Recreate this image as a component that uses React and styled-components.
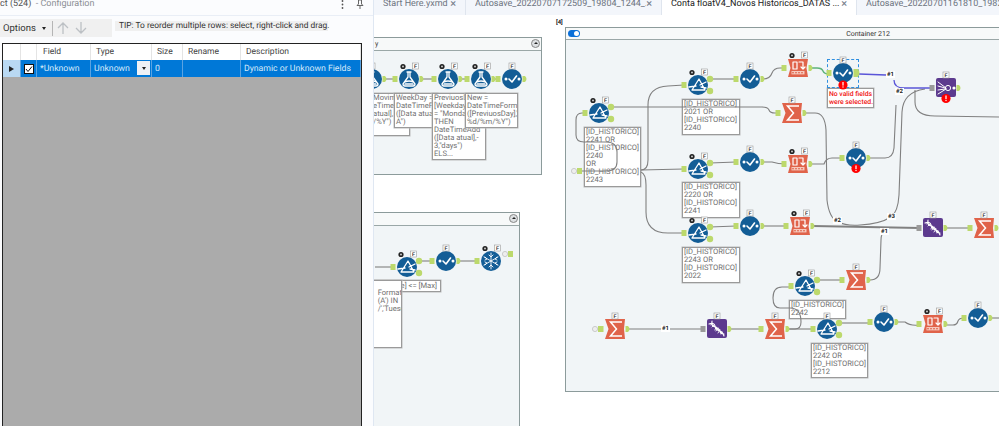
import React from "react";
import styled, { createGlobalStyle } from "styled-components";

const OX = 374;
const OY = 15;
const BLUE = "#135d96";
const ORANGE = "#e0634a";
const PURPLE = "#5c3a8e";
const GREEN = "#bcd96c";

const Global = createGlobalStyle`
  html, body { margin: 0; padding: 0; background: #fff; overflow: hidden; }
  * { box-sizing: border-box; }
`;

const Page = styled.div`
  display: flex;
  width: 999px;
  height: 426px;
  overflow: hidden;
  font-family: Roboto, "Open Sans", sans-serif;
  text-rendering: geometricPrecision;
`;

/* ---------- configuration panel ---------- */
const Panel = styled.aside`
  display: flex;
  flex-direction: column;
  flex: 0 0 374px;
  height: 426px;
  background: #fbfcfe;
  border-right: 1px solid #dfe7f2;
  overflow: hidden;
`;
const PanelHead = styled.header`
  display: flex;
  align-items: center;
  height: 16px;
  padding: 0 9px 7px 0;
  font-size: 9px;
  color: #555;
  border-bottom: 1px solid #e9eef6;
`;
const PanelTitle = styled.span`
  flex: 1;
  white-space: pre;
  line-height: 9px;
`;
const Muted = styled.span`
  color: #8b8f95;
`;
const HeadIcons = styled.div`
  display: flex;
  align-items: center;
  gap: 12px;
  color: #666;
`;
const Tools = styled.div`
  display: flex;
  align-items: flex-start;
  gap: 3px;
  height: 27px;
  padding-top: 3px;
`;
const OptionsBar = styled.div`
  display: flex;
  align-items: center;
  width: 112px;
  height: 18px;
  padding-left: 3px;
  background: #f0f0f0;
  font-size: 9.5px;
  color: #333;
`;
const Caret = styled.span`
  width: 0;
  height: 0;
  margin: 0 ${(p) => p.$m ?? 6}px;
  border: 2.5px solid transparent;
  border-top: 3px solid #222;
  border-bottom: 0;
`;
const Divider = styled.span`
  width: 1px;
  height: 15px;
  background: #b5b5b5;
  margin-right: 3px;
`;
const Tip = styled.div`
  width: 213px;
  height: 10px;
  margin-top: 2px;
  padding-left: 4px;
  background: #f0f0f0;
  font-size: 8.4px;
  line-height: 10px;
  color: #333;
  white-space: nowrap;
`;
const GridFrame = styled.div`
  display: flex;
  flex-direction: column;
  flex: 1;
  width: 360px;
  margin-left: 2px;
  border: 1px solid #222;
  border-bottom: 0;
  background: #ababab;
`;
const GridRow = styled.div`
  display: grid;
  grid-template-columns: 18px 16px 54px 61px 31px 58px 1fr;
  height: ${(p) => p.$h}px;
  background: ${(p) => p.$bg};
`;
const HeadCell = styled.div`
  padding-left: ${(p) => p.$pad || 6}px;
  border-right: 1px solid #e4e4e4;
  font-size: 8.5px;
  line-height: 16px;
  color: #444;
`;
const Cell = styled.div`
  position: relative;
  display: flex;
  align-items: center;
  padding-left: 3px;
  border-right: 1px solid #5aa3e2;
  font-size: 8.7px;
  color: #d5e8f9;
  white-space: nowrap;
`;
const RowHeader = styled(Cell)`
  justify-content: center;
  padding: 0;
  background: #b9d9f3;
`;
const Arrow = styled.span`
  width: 0;
  height: 0;
  border: 3px solid transparent;
  border-left: 5px solid #222;
  border-right: 0;
`;
const Check = styled.span`
  display: flex;
  align-items: center;
  justify-content: center;
  width: 10px;
  height: 10px;
  background: #fff;
  border: 1px solid #111;
`;
const Drop = styled.span`
  position: absolute;
  right: 1px;
  top: 1px;
  display: flex;
  align-items: center;
  justify-content: center;
  width: 13px;
  height: 14px;
  background: #eef1f5;
`;

/* ---------- main area ---------- */
const Main = styled.main`
  display: flex;
  flex-direction: column;
  flex: 1;
  min-width: 0;
`;
const TabBar = styled.nav`
  display: flex;
  flex: 0 0 15px;
  background: #f3f6fb;
  overflow: hidden;
`;
const Tab = styled.div`
  display: flex;
  flex: 0 0 ${(p) => p.$w}px;
  min-width: 0;
  align-items: flex-start;
  height: 15px;
  padding: 0 9px 0 9px;
  background: ${(p) => (p.$active ? "#fff" : "transparent")};
  border-right: 1px solid #dfe5ee;
  font-size: 9px;
  line-height: 9px;
  color: ${(p) => (p.$active ? "#222" : "#6d7480")};
  white-space: nowrap;
`;
const TabLabel = styled.span`
  flex: 1;
  min-width: 0;
  height: 11px;
  overflow: hidden;
`;
const TabClose = styled.span`
  font-size: 11px;
  line-height: 8px;
  color: #77808c;
`;
const Canvas = styled.section`
  position: relative;
  flex: 1;
  overflow: hidden;
  background: #fff;
`;
const place = (p) => ({
  style: {
    left: p.$x - OX,
    top: p.$y - OY,
    width: p.$w,
    height: p.$h,
  },
});
const Container = styled.div.attrs(place)`
  position: absolute;
  background: #f1f5f7;
  border: 1.5px solid #8c9b9b;
`;
const ContainerHead = styled.div`
  display: flex;
  align-items: center;
  justify-content: center;
  position: relative;
  height: ${(p) => p.$h}px;
  background: #f7f9f9;
  border-bottom: 1.5px solid #9aa7a7;
  font-size: 7px;
  color: #333;
`;
const Collapse = styled.span`
  position: absolute;
  top: 1px;
  right: 1px;
  width: 9px;
  height: 9px;
  border: 1px solid #888;
  border-radius: 50%;
  background: #dde0e2;
  &::after {
    content: "";
    position: absolute;
    left: 1.5px;
    top: 1.5px;
    border: 2px solid transparent;
    border-bottom: 2.5px solid #222;
    border-top: 0;
  }
`;
const Toggle = styled.span`
  position: absolute;
  left: 2px;
  top: 2px;
  width: 12px;
  height: 7px;
  border-radius: 4px;
  background: #0a6fd8;
  &::after {
    content: "";
    position: absolute;
    right: 1px;
    top: 1px;
    width: 5px;
    height: 5px;
    border-radius: 50%;
    background: #fff;
  }
`;
const HeadText = styled.span`
  position: absolute;
  left: 44px;
  top: 2px;
  line-height: 8px;
`;
const TinyLabel = styled.span.attrs(place)`
  position: absolute;
  font-size: 6px;
  line-height: 7px;
  font-weight: 700;
  color: #222;
  background: ${(p) => p.$bg || "transparent"};
  padding: 0 1px;
  white-space: nowrap;
`;
const Note = styled.div.attrs(place)`
  position: absolute;
  padding: ${(p) => (p.$alert ? "1px 0 0 1px" : "0 0 0 1px")};
  background: #fff;
  border: 1px solid #9a9a9a;
  box-shadow: 0 0 0 0.5px #bbb;
  font-size: ${(p) => (p.$alert ? 6.8 : 7.6)}px;
  line-height: 8px;
  font-weight: ${(p) => (p.$alert ? 500 : 400)};
  color: ${(p) => (p.$alert ? "#f01010" : "#707070")};
  overflow: hidden;
  white-space: nowrap;
`;
const NoteLine = styled.div`
  height: 8px;
  white-space: pre;
  text-align: ${(p) => (p.$right ? "right" : "left")};
  padding: ${(p) => (p.$right ? "1px 3px 0 0" : "0")};
`;
const Wires = styled.svg`
  position: absolute;
  left: 0;
  top: 0;
  width: 625px;
  height: 411px;
  fill: none;
`;
const ToolBox = styled.svg.attrs((p) => ({
  style: { left: p.$x - OX - 24, top: p.$y - OY - 24 },
}))`
  position: absolute;
  width: 48px;
  height: 48px;
  overflow: visible;
`;
const Selection = styled.div.attrs(place)`
  position: absolute;
  border: 1px dashed #2f8fe0;
`;

/* ---------- tool icons ---------- */
const W = { stroke: "#fff", fill: "none", strokeWidth: 1.3, strokeLinecap: "round", strokeLinejoin: "round" };

const Filter = () => (
  <>
    <circle r="10" fill={BLUE} />
    <path d="M1 -6 L7 5 L-6 5 Z M-9 2 L-2 1 M2 0 L8 -3 M3 2 L8 3" {...W} />
  </>
);
const Select = () => (
  <>
    <circle r="10" fill={BLUE} />
    <circle cx="-6" cy="0" r="1.5" fill="#fff" />
    <circle cx="7" cy="0" r="1.5" fill="#fff" />
    <path d="M-3 0 L0 3 L4.5 -3" {...W} strokeWidth="1.6" />
  </>
);
const Flask = () => (
  <>
    <circle r="10" fill={BLUE} />
    <path d="M-2 -7 L2 -7 M-1 -7 L-1 -2 L-6 5 Q-6 7 -4 7 L4 7 Q6 7 6 5 L1 -2 L1 -7 M-4 3 Q0 1 4 3" {...W} />
    <path d="M-4 4 L4 4 L5 6 L-5 6 Z" fill="#fff" opacity="0.75" />
  </>
);
const Snow = () => (
  <>
    <circle r="10" fill={BLUE} />
    <path d="M0 -8 L0 8 M-7 -4 L7 4 M-7 4 L7 -4 M-2 -6 L0 -4 L2 -6 M-2 6 L0 4 L2 6 M-6 -1 L-4 -2 L-6 -4 M6 1 L4 2 L6 4 M-6 1 L-4 2 L-6 4 M6 -1 L4 -2 L6 -4" {...W} strokeWidth="0.9" />
  </>
);
const Sigma = () => (
  <>
    <path d="M-10 -10 L10 -10 L9 0 L10 10 L-10 10 L-6.5 0 Z" fill={ORANGE} />
    <path d="M7 -7 L-4.5 -7 L1.5 0 L-4.5 7 L7 7" {...W} strokeWidth="1.5" strokeLinecap="butt" strokeLinejoin="miter" />
  </>
);
const Columns = () => (
  <>
    <path d="M-10 -9 L10 -9 L8.5 0 L10 9 L-10 9 L-7.5 0 Z" fill={ORANGE} />
    <path d="M-5 -6 L-1 -6 L-1 1 L-5 1 Z M1 -6 L5 -6 L5 1 M3 -1 L5 1 L7 -1" {...W} strokeWidth="1.2" />
    <rect x="-6.5" y="3" width="13" height="3.4" fill="#f6c9bd" />
    <path d="M-6 4.7 L6 4.7" stroke={ORANGE} strokeWidth="1.1" strokeDasharray="2 1" />
  </>
);
const Union = () => (
  <>
    <rect x="-10" y="-10" width="20" height="19" rx="2" fill={PURPLE} />
    <path d="M-8 -6 L0 0 M-8 -2 L-1 0 M-8 2 L-1 1 M-8 6 L0 1" {...W} strokeWidth="1" />
    <circle cx="2" cy="0" r="2.6" fill="none" stroke="#fff" strokeWidth="1" />
    <circle cx="8" cy="0" r="1.6" fill="#fff" />
  </>
);
const Dna = () => (
  <>
    <rect x="-10" y="-10" width="20" height="19" rx="2" fill={PURPLE} />
    <path d="M-8 -5 Q-3 -7 -2 -3 Q-1 1 3 2 Q6 3 7 7 M-5 -8 Q-6 -3 -2 -2 Q2 -1 3 2 Q3 5 7 5" {...W} strokeWidth="1.1" />
    <path d="M-5 -6 L-6 -4 M-3 -4 L-5 -2 M-1 -2 L-2 1 M1 -1 L-1 2 M3 1 L1 4 M5 3 L4 5" {...W} strokeWidth="0.9" />
  </>
);

const ICONS = { filter: Filter, select: Select, flask: Flask, snow: Snow, sigma: Sigma, columns: Columns, union: Union, dna: Dna };

const InPort = ({ x = -14, y = 0, gray }) => (
  <rect x={x - 2.5} y={y - 3} width="5" height="6" fill={gray ? "#9a9a9a" : GREEN} />
);
const OutPort = ({ x = 13, y = 0, big }) => (
  <path d={`M${x - 2.5} ${y - (big ? 4 : 3)} L${x + (big ? 2 : 0)} ${y - (big ? 4 : 3)} Q${x + (big ? 5 : 3)} ${y} ${x + (big ? 2 : 0)} ${y + (big ? 4 : 3)} L${x - 2.5} ${y + (big ? 4 : 3)} Z`} fill={GREEN} />
);
const Ball = ({ y }) => <circle cx="12" cy={y} r="3.2" fill={GREEN} />;
const Tag = ({ x, y }) => (
  <>
    <rect x={x - 3} y={y - 3} width="6" height="6" fill="#fff" stroke="#999" strokeWidth="0.6" />
    <text x={x} y={y + 2} fontSize="5" fontWeight="700" textAnchor="middle" fill="#333" fontFamily="Liberation Sans, sans-serif">F</text>
  </>
);
const Gear = ({ x, y }) => (
  <>
    <circle cx={x} cy={y} r="2.6" fill="#222" />
    <circle cx={x} cy={y} r="0.9" fill="#ddd" />
  </>
);
const Alert = ({ y = 11 }) => (
  <>
    <circle cy={y} r="4.6" fill="#f00" />
    <rect x="-0.6" y={y - 3} width="1.2" height="3.6" fill="#fff" />
    <rect x="-0.6" y={y + 1.4} width="1.2" height="1.2" fill="#fff" />
  </>
);

const Tool = ({ kind, x, y, gear, alert, alertY, noIn, noOut, grayIn, big }) => {
  const Icon = ICONS[kind];
  const isFilter = kind === "filter";
  return (
    <ToolBox $x={x} $y={y} viewBox="-24 -24 48 48">
      <Icon />
      {!noIn && <InPort gray={grayIn} />}
      {isFilter ? (
        <>
          <Ball y={-6} />
          <Ball y={6} />
        </>
      ) : (
        !noOut && <OutPort big={big} />
      )}
      {gear && <Gear x={-6} y={-12.5} />}
      <Tag x={gear ? 6.5 : 0} y={-13} />
      {alert && <Alert y={alertY} />}
    </ToolBox>
  );
};

const Stub = ({ x, y }) => (
  <ToolBox $x={x} $y={y} viewBox="-24 -24 48 48">
    <circle cx="-5" cy="0" r="2.6" fill="#eee" stroke="#bbb" strokeWidth="0.7" />
    <rect x="-2" y="-3" width="5" height="6" fill={GREEN} />
  </ToolBox>
);

/* ---------- data ---------- */
const TOOLS = [
  { kind: "flask", x: 372, y: 79, noIn: true },
  { kind: "flask", x: 409, y: 79, gear: true },
  { kind: "flask", x: 448, y: 79, gear: true },
  { kind: "flask", x: 481, y: 79, gear: true },
  { kind: "select", x: 512, y: 79 },
  { kind: "filter", x: 407, y: 267, gear: true },
  { kind: "select", x: 446, y: 261 },
  { kind: "snow", x: 491, y: 261, gear: true, noOut: true },
  { kind: "filter", x: 599, y: 113, gear: true },
  { kind: "filter", x: 698, y: 85, gear: true },
  { kind: "select", x: 750, y: 79 },
  { kind: "filter", x: 698, y: 169, gear: true },
  { kind: "select", x: 750, y: 162 },
  { kind: "filter", x: 698, y: 233, gear: true },
  { kind: "select", x: 750, y: 226 },
  { kind: "columns", x: 798, y: 68, gear: true },
  { kind: "select", x: 843, y: 73, alert: true, alertY: 12, big: true },
  { kind: "union", x: 946, y: 88, alert: true, alertY: 10.5, grayIn: true },
  { kind: "sigma", x: 792, y: 113 },
  { kind: "columns", x: 798, y: 164, gear: true },
  { kind: "select", x: 856, y: 158, alert: true, alertY: 10.5 },
  { kind: "columns", x: 800, y: 226, gear: true },
  { kind: "dna", x: 933, y: 228, grayIn: true },
  { kind: "sigma", x: 984, y: 228 },
  { kind: "filter", x: 805, y: 286, gear: true },
  { kind: "sigma", x: 856, y: 280 },
  { kind: "sigma", x: 775, y: 329 },
  { kind: "filter", x: 827, y: 329 },
  { kind: "select", x: 884, y: 322 },
  { kind: "columns", x: 933, y: 324, gear: true },
  { kind: "select", x: 978, y: 318 },
  { kind: "sigma", x: 615, y: 329 },
  { kind: "dna", x: 717, y: 329, grayIn: true },
];

const GRAY_WIRES = [
  "M384 79 L397 79",
  "M423 79 L436 79",
  "M461 79 L469 79",
  "M494 79 L498 79",
  "M375 267 L393 267",
  "M419 261 L432 261",
  "M459 261 L477 261",
  "M586 113 L582 113 Q576 113 576 120 L576 135 Q576 142 584 142 L606 142 Q617 142 617 152 L617 162 Q617 171 606 171 L582 171",
  "M641 170 L684 169",
  "M641 170 Q648 170 648 160 L648 105 Q648 87 668 86 L684 85",
  "M641 172 Q646 174 646 185 L646 212 Q646 233 668 233 L684 233",
  "M611 107 L762 107 Q768 107 769 110 Q770 113 775 113 L779 113",
  "M710 79 L736 79",
  "M710 163 L736 162",
  "M710 227 L736 226",
  "M763 79 Q770 79 772 73 Q774 68 780 68 L786 68",
  "M763 162 L772 162 Q778 164 786 164",
  "M763 226 L786 226",
  "M811 164 L824 164 Q826 158 832 158 L843 158",
  "M806 113 L815 113 Q825 113 826 130 L827 200 Q829 218 838 222 Q846 226 860 225 Q880 224 891 217 Q898 212 899 195 L902 112 Q903 92 925 89",
  "M869 158 L885 158 Q893 158 894 148 L896 105",
  "M915 90 L915 102 Q915 116 935 116 L999 117",
  "M818 280 L842 280",
  "M870 280 Q880 280 880 268 L881 240 Q881 233 885 232",
  "M788 329 L795 329 Q801 329 801 322 Q801 308 790 308 L780 308 Q773 308 773 298 Q773 287 782 287 L791 287",
  "M788 329 L813 329",
  "M839 323 L870 323",
  "M897 322 L905 322 Q910 326 919 325",
  "M947 325 L953 325 Q957 325 958 321 Q959 318 964 318",
  "M991 318 L999 318",
  "M629 329 L703 329",
  "M730 329 L761 329",
  "M946 228 L971 228",
];

const THICK_WIRES = ["M813 226 L920 228"];

const NOTE_BOXES = [
  { x: 371, y: 93, w: 39, h: 43, lines: ["Movime", "eTimeP", "atual],", '/%Y")'] },
  { x: 394, y: 93, w: 44, h: 35, lines: ["WeekDay =", "DateTimeFor", "([Data atual],", 'A")'] },
  { x: 432, y: 93, w: 54, h: 67, lines: ["PreviuosDay", "[Weekday]", '= "Monday"', "THEN", "DateTimeAdd", "([Data atual],-", '3,"days")', "ELS..."] },
  { x: 465, y: 93, w: 53, h: 35, lines: ["New =", "DateTimeFormat", '([PreviuosDay],"', '%d/%m/%Y")'] },
  { x: 370, y: 280, w: 71, h: 12, right: true, lines: ["te] <= [Max]"] },
  { x: 370, y: 280, w: 32, h: 68, lines: ["", "   Format", "   (A') IN", "   /','Tuesd"] },
  { x: 682, y: 99, w: 58, h: 36, lines: ["[ID_HISTORICO] =", "2021 OR", "[ID_HISTORICO] =", "2240"] },
  { x: 682, y: 182, w: 58, h: 36, lines: ["[ID_HISTORICO] =", "2220 OR", "[ID_HISTORICO] =", "2241"] },
  { x: 682, y: 247, w: 58, h: 36, lines: ["[ID_HISTORICO] =", "2243 OR", "[ID_HISTORICO] =", "2022"] },
  { x: 584, y: 127, w: 57, h: 60, lines: ["[ID_HISTORICO] =", "2241 OR", "[ID_HISTORICO] =", "2240", "OR", "[ID_HISTORICO] =", "2243"] },
  { x: 789, y: 300, w: 57, h: 19, lines: ["[ID_HISTORICO] =", "2242"] },
  { x: 811, y: 343, w: 57, h: 35, lines: ["[ID_HISTORICO] =", "2242 OR", "[ID_HISTORICO] =", "2212"] },
  { x: 827, y: 88, w: 47, h: 20, alert: true, lines: ["No valid fields", "were selected."] },
];

const LABELS = [
  { t: "#1", x: 886, y: 71, bg: "#fff" },
  { t: "#2", x: 895, y: 88, bg: "#fff" },
  { t: "#2", x: 833, y: 217, bg: "#fff" },
  { t: "#3", x: 887, y: 213, bg: "#fff" },
  { t: "#1", x: 880, y: 228, bg: "#fff" },
  { t: "#1", x: 661, y: 325, bg: "#fff" },
  { t: "[4]", x: 555, y: 19 },
];

const COLS = [
  ["", 6],
  ["", 6],
  ["Field", 6],
  ["Type", 5],
  ["Size", 5],
  ["Rename", 5],
  ["Description", 5],
];

const App = () => (
  <Page>
    <Global />
    <Panel>
      <PanelHead>
        <PanelTitle>
          ct (524)  <Muted>- Configuration</Muted>
        </PanelTitle>
        <HeadIcons>
          <svg width="3" height="9" viewBox="0 0 3 9"><circle cx="1.5" cy="1" r="0.9" fill="#555" /><circle cx="1.5" cy="4.5" r="0.9" fill="#555" /><circle cx="1.5" cy="8" r="0.9" fill="#555" /></svg>
          <svg width="8" height="10" viewBox="0 0 8 10" fill="none" stroke="#666" strokeWidth="1"><path d="M2 1 L6 1 M2.5 1 L2.5 5 L1 6.5 L7 6.5 L5.5 5 L5.5 1 M4 6.5 L4 10" /></svg>
        </HeadIcons>
      </PanelHead>
      <Tools>
        <OptionsBar>
          Options
          <Caret />
          <Divider />
          <svg width="34" height="14" viewBox="0 0 34 14" fill="none" stroke="#bcc0c4" strokeWidth="1.3"><path d="M7 13 L7 2 M2 7 L7 2 L12 7 M25 1 L25 12 M20 7 L25 12 L30 7" /></svg>
        </OptionsBar>
        <Tip>TIP: To reorder multiple rows: select, right-click and drag.</Tip>
      </Tools>
      <GridFrame>
        <GridRow $h={16} $bg="#fff">
          {COLS.map(([t, pad], i) => (
            <HeadCell key={i} $pad={pad}>{t}</HeadCell>
          ))}
        </GridRow>
        <GridRow $h={17} $bg="#0078d7">
          <RowHeader><Arrow /></RowHeader>
          <Cell>
            <Check>
              <svg width="8" height="8" viewBox="0 0 8 8" fill="none" stroke="#111" strokeWidth="1"><path d="M1 4 L3 6.5 L7 1.5" /></svg>
            </Check>
          </Cell>
          <Cell>*Unknown</Cell>
          <Cell>
            Unknown
            <Drop><Caret $m={0} /></Drop>
          </Cell>
          <Cell>0</Cell>
          <Cell />
          <Cell>Dynamic or Unknown Fields</Cell>
        </GridRow>
      </GridFrame>
    </Panel>
    <Main>
      <TabBar>
        <Tab $w={92}><TabLabel>Start Here.yxmd</TabLabel><TabClose>×</TabClose></Tab>
        <Tab $w={196}><TabLabel>Autosave_20220707172509_19804_1244_...</TabLabel><TabClose>×</TabClose></Tab>
        <Tab $w={195} $active><TabLabel>Conta floatV4_Novos Historicos_DATAS ...</TabLabel><TabClose>×</TabClose></Tab>
        <Tab $w={160}><TabLabel>Autosave_20220701161810_19824_...</TabLabel></Tab>
      </TabBar>
      <Canvas>
        <Container $x={330} $y={37} $w={212} $h={138}>
          <ContainerHead $h={13}>
            <HeadText>y</HeadText>
            <Collapse />
          </ContainerHead>
        </Container>
        <Container $x={330} $y={212} $w={190} $h={240}>
          <ContainerHead $h={13}>
            <Collapse />
          </ContainerHead>
        </Container>
        <Container $x={565} $y={27} $w={606} $h={365}>
          <ContainerHead $h={12}>
            <Toggle />
            Container 212
          </ContainerHead>
        </Container>

        {NOTE_BOXES.map((n, i) => (
          <Note key={i} $x={n.x} $y={n.y} $w={n.w} $h={n.h} $alert={n.alert}>
            {n.lines.map((l, j) => <NoteLine key={j} $right={n.right}>{l}</NoteLine>)}
          </Note>
        ))}

        <Wires viewBox="374 15 625 411">
          <g stroke="#808080" strokeWidth="1.1">
            {GRAY_WIRES.map((d, i) => <path key={i} d={d} />)}
          </g>
          <g stroke="#808080" strokeWidth="1.8">
            {THICK_WIRES.map((d, i) => <path key={i} d={d} />)}
          </g>
          <path d="M812 68 L817 68 Q822 68 823 71 Q824 74 829 74" stroke="#5db37a" strokeWidth="1.4" />
          <path d="M859 74 L886 75 M894 80 Q894 88 904 88 L930 88" stroke="#5a55d8" strokeWidth="1.3" />
        </Wires>

        <Selection $x={827} $y={59} $w={32} $h={29} />

        {TOOLS.map((t, i) => <Tool key={i} {...t} />)}
        <Stub x={579} y={171} />
        <Stub x={600} y={329} />
        <Stub x={510} y={254} />

        {LABELS.map((l, i) => (
          <TinyLabel key={i} $x={l.x} $y={l.y} $bg={l.bg}>{l.t}</TinyLabel>
        ))}
      </Canvas>
    </Main>
  </Page>
);

export default App;
